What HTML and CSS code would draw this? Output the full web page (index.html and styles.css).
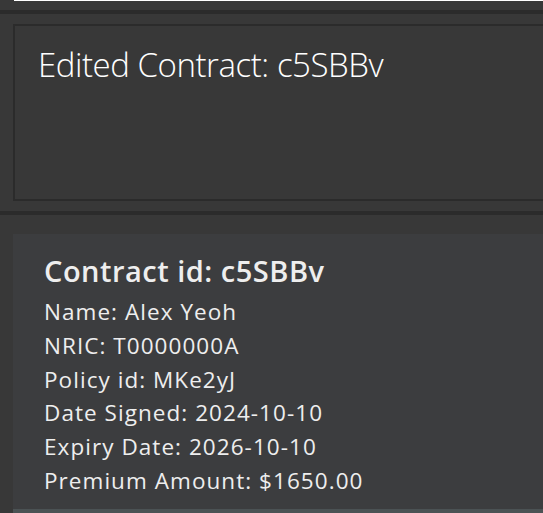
FILE: index.html
```html
<!DOCTYPE html>
<html>
<head>
<meta charset="utf-8">
<link rel="stylesheet" href="styles.css">
</head>
<body>
<div class="page">
  <div class="top-edge"></div>
  <div class="divider first"></div>
  <div class="result-pane">
    <div class="result-box">Edited Contract: c5SBBv</div>
  </div>
  <div class="divider second"></div>
  <div class="list-pane">
    <div class="card">
      <div class="card-title">Contract id: c5SBBv</div>
      <div class="field">Name: Alex Yeoh</div>
      <div class="field">NRIC: T0000000A</div>
      <div class="field">Policy id: MKe2yJ</div>
      <div class="field">Date Signed: 2024-10-10</div>
      <div class="field">Expiry Date: 2026-10-10</div>
      <div class="field">Premium Amount: $1650.00</div>
    </div>
    <div class="next-card"></div>
  </div>
</div>
</body>
</html>
```

FILE: styles.css
```css
html, body {
  margin: 0;
  padding: 0;
  background: #383838;
  overflow: hidden;
}
.page {
  width: 543px;
  height: 513px;
  overflow: hidden;
  font-family: "Open Sans", "Noto Sans", sans-serif;
}
.top-edge {
  margin-left: 14px;
  height: 1px;
  background: #ffffff;
}
.divider {
  height: 4px;
  background: #2b2b2b;
}
.divider.first {
  margin-top: 9px;
}
.result-pane {
  padding: 10px 0 10px 13px;
}
.result-box {
  width: 560px;
  height: 173px;
  border: 2px solid #2b2b2b;
  border-right: none;
  box-sizing: content-box;
  color: #ffffff;
  font-weight: 300;
  font-size: 33px;
  letter-spacing: -0.45px;
  padding: 0 0 0 23px;
  line-height: 78px;
}
.list-pane {
  padding: 19px 0 0 13px;
}
.card {
  width: 560px;
  height: 275px;
  background: #3c3d3f;
  padding: 17px 0 0 31px;
  box-sizing: border-box;
  color: #eeeeee;
}
.card-title {
  font-size: 29px;
  font-weight: 600;
  letter-spacing: 0.5px;
  line-height: 40px;
  margin-bottom: 4px;
}
.field {
  font-size: 22.5px;
  letter-spacing: 1.05px;
  line-height: 33.8px;
}
.next-card {
  width: 560px;
  height: 10px;
  background: #4b5254;
}
```
